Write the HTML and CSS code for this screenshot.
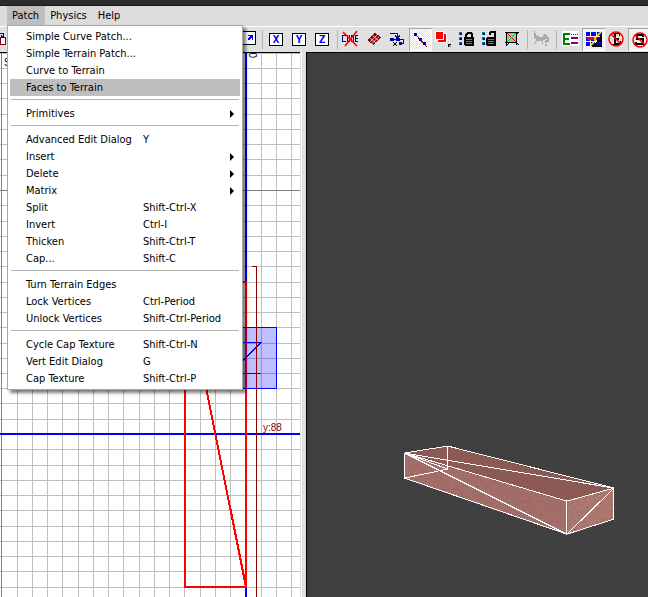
FILE: index.html
```
<!DOCTYPE html>
<html lang="en">

<head>
    <meta charset="UTF-8">
    <meta name="viewport" content="width=device-width, initial-scale=1.0">
    <title>Map Editor</title>
    <link rel="stylesheet" href="styles.css">
</head>

<body>
    <div class="titlebar"></div>

    <nav class="menubar">
        <div class="menu-entry">
            <button class="menu-title open" type="button">Patch</button>
            <ul class="menu">
                <li><button class="menu-item" type="button">Simple Curve Patch...</button></li>
                <li><button class="menu-item" type="button">Simple Terrain Patch...</button></li>
                <li><button class="menu-item" type="button">Curve to Terrain</button></li>
                <li><button class="menu-item active" type="button">Faces to Terrain</button></li>
                <li class="divider"></li>
                <li><button class="menu-item submenu" type="button">Primitives</button></li>
                <li class="divider"></li>
                <li><button class="menu-item" type="button"><span>Advanced Edit Dialog</span><span>Y</span></button></li>
                <li><button class="menu-item submenu" type="button">Insert</button></li>
                <li><button class="menu-item submenu" type="button">Delete</button></li>
                <li><button class="menu-item submenu" type="button">Matrix</button></li>
                <li><button class="menu-item" type="button"><span>Split</span><span>Shift-Ctrl-X</span></button></li>
                <li><button class="menu-item" type="button"><span>Invert</span><span>Ctrl-I</span></button></li>
                <li><button class="menu-item" type="button"><span>Thicken</span><span>Shift-Ctrl-T</span></button></li>
                <li><button class="menu-item" type="button"><span>Cap...</span><span>Shift-C</span></button></li>
                <li class="divider"></li>
                <li><button class="menu-item" type="button">Turn Terrain Edges</button></li>
                <li><button class="menu-item" type="button"><span>Lock Vertices</span><span>Ctrl-Period</span></button></li>
                <li><button class="menu-item" type="button"><span>Unlock Vertices</span><span>Shift-Ctrl-Period</span></button></li>
                <li class="divider"></li>
                <li><button class="menu-item" type="button"><span>Cycle Cap Texture</span><span>Shift-Ctrl-N</span></button></li>
                <li><button class="menu-item" type="button"><span>Vert Edit Dialog</span><span>G</span></button></li>
                <li><button class="menu-item" type="button"><span>Cap Texture</span><span>Shift-Ctrl-P</span></button></li>
            </ul>
        </div>
        <button class="menu-title" type="button">Physics</button>
        <button class="menu-title" type="button">Help</button>
    </nav>

    <div class="toolbar">
        <div class="tools-left">
            <button class="tool" type="button" aria-label="Rotate">
                <svg viewBox="0 0 23 23"><path d="M0 5.500h3.500v4M1 7.500l2.500 2.500" fill="none" stroke="#00009c"/><rect x="0.500" y="9.500" width="5" height="7" fill="#fff" stroke="#8b0000"/></svg>
            </button>
        </div>
        <button class="tool" type="button" aria-label="Scale">
            <svg viewBox="0 0 23 23"><path d="M3 3h17v14H3z"/><path d="M4 4h15v12H4z" fill="#fff"/><path d="M12 7h5v5h-1v-2h-1v1h-1v1h-2v-2h1V9h1V8h-2z" fill="#00f"/></svg>
        </button>
        <span class="tool-sep"></span>
        <button class="tool" type="button" aria-label="X axis"><span class="axis">X</span></button>
        <button class="tool" type="button" aria-label="Y axis"><span class="axis">Y</span></button>
        <button class="tool" type="button" aria-label="Z axis"><span class="axis">Z</span></button>
        <span class="tool-sep"></span>
        <button class="tool" type="button" aria-label="No curves">
            <svg viewBox="0 0 23 23">
                <path d="M6 7.500H2.500v6H6M7.500 7v6.500h2V7M11.500 14V7.500h2V14M18 7.500h-2.500v6H18M15.500 10.500H18" fill="none" stroke="#00009c"/>
                <path class="smooth" d="M3 4l14 14M17 3L5 18" fill="none" stroke="#f00" stroke-width="1.500"/>
            </svg>
        </button>
        <button class="tool" type="button" aria-label="Patch mesh">
            <svg viewBox="0 0 23 23">
                <path d="M12 5l6 4-7 8-7-5z" fill="#8b0000"/>
                <path class="smooth" d="M9.500 7.500l6 5M7 10l6 5M14 7l-7 7M16 8.500l-7 7" fill="none" stroke="#e0c8c8"/>
            </svg>
        </button>
        <button class="tool" type="button" aria-label="Redisperse">
            <svg viewBox="0 0 23 23">
                <path d="M4 5.500h7.500v4M9 7.500l2.500 2.500 2.500-2.500M4 11.500h13.500v4h-3" fill="none" stroke="#00009c"/>
                <path d="M4 10h4v3H4zM10 10h4v3h-4zM13 14h3v3h-3z" fill="#00009c"/>
                <path d="M7 14h1v1h1v1h1v-1h1v-1h-1v1H9v1H8v1H7v1h1v-1h1v-1h1v1h1v1h-1v-1H9v-1H8v-1H7z"/>
            </svg>
        </button>
        <button class="tool pressed" type="button" aria-label="Vertices">
            <svg viewBox="0 0 23 23">
                <path d="M6 6l12 13" stroke="#8b0000"/>
                <path d="M5 5h3v3H5zM10 10h3v3h-3zM14 14h3v3h-3z" fill="#00009c"/>
            </svg>
        </button>
        <button class="tool" type="button" aria-label="Layers">
            <svg viewBox="0 0 23 23">
                <path d="M3 3h10v2h2v10H6v-2H3z" fill="#fff"/>
                <path d="M4 4h7v7H4z" fill="#f00"/>
                <path d="M12 6h2v8H6v-2h6z" fill="#f00"/>
                <path d="M16 16h3v1h-2v2h-1z"/><path d="M17 17h2v2h-2z" fill="#999"/>
            </svg>
        </button>
        <button class="tool" type="button" aria-label="Lock">
            <svg viewBox="0 0 23 23">
                <path d="M4 4h3v3H4zM4 9h3v3H4zM4 14h3v3H4z" fill="#00808b"/>
                <path d="M5 5h2v2H5zM5 10h2v2H5zM5 15h2v2H5z" fill="#00009c"/>
                <path d="M10 10V6l1-1 1-1h4l1 1 1 1v4h-2V7l-1-1h-2l-1 1v3z"/>
                <path d="M9 9h10v8l-1 1h-8l-1-1z"/>
                <path d="M11 11.500h6M11 13.500h6M11 15.500h6" stroke="#777"/>
            </svg>
        </button>
        <button class="tool" type="button" aria-label="Unlock">
            <svg viewBox="0 0 23 23">
                <path d="M4 4h3v3H4zM4 9h3v3H4zM4 14h3v3H4z" fill="#00808b"/>
                <path d="M5 5h2v2H5zM5 10h2v2H5zM5 15h2v2H5z" fill="#00009c"/>
                <path d="M11 7V4l1-1h5l1 1v6h-2V6l-1-1h-2v2z"/>
                <path d="M9 9h9v8l-1 1H9l-1-1v-7z"/>
                <path d="M10 11.500h6M10 13.500h6M10 15.500h6" stroke="#777"/>
            </svg>
        </button>
        <button class="tool" type="button" aria-label="Clip bounds">
            <svg viewBox="0 0 23 23">
                <path d="M6 5h10v9H6z" fill="#b4b4b4"/>
                <path d="M4 4.500h14M4 14.500h12M5.500 4v14M15.500 4v13M5 18l3-3M15 7l3-3M15 14l3 3" fill="none" stroke="#000"/>
                <path d="M6 5l9 9" stroke="#f00"/>
                <path d="M15 5l-9 9" stroke="#0d3"/>
            </svg>
        </button>
        <span class="tool-sep"></span>
        <button class="tool" type="button" aria-label="Physics preview" disabled>
            <svg viewBox="0 0 23 23">
                <path d="M4 3h1l1 4 4 2h3l1-3 3 1v2h-2v3h-2v4h-1v-3H7l-2 3H4l2-4-2-3z" fill="#aaa"/>
                <path d="M14 12v-2h4v3h-2v2M15 17h2" fill="none" stroke="#aaa" stroke-width="2"/>
            </svg>
        </button>
        <span class="tool-sep"></span>
        <button class="tool" type="button" aria-label="Entities">
            <svg viewBox="0 0 23 23">
                <path d="M3 3h17v15H3z" fill="#fff"/>
                <path d="M11 6H5v10h6M5 11h5" fill="none" stroke="#008000" stroke-width="2"/>
                <path d="M12 6.500h7" stroke="#800080" stroke-dasharray="1 1"/>
                <path d="M12 9h7v2h-7zM12 14h7v2h-7z" fill="#800080"/>
            </svg>
        </button>
        <button class="tool pressed" type="button" aria-label="Texture grid">
            <svg viewBox="0 0 23 23">
                <path d="M4 4h4v4H4zM9 4h5v4H9zM15 4h5v4h-5zM4 9h4v4H4zM9 9h5v4H9zM15 9h5v4h-5zM4 14h4v4H4zM9 14h4v4H9z" fill="#00f"/>
                <path d="M5 9h10v3H5z" fill="#f00"/>
                <path d="M20 5v14H9l6-6z"/>
                <path d="M15 14h4v4h-4z" fill="#00009c"/>
                <path class="smooth" d="M19 4l-6 6v3l-5 5" fill="none" stroke="#ff0" stroke-width="1.500"/>
            </svg>
        </button>
        <button class="tool" type="button" aria-label="No entities">
            <svg viewBox="0 0 23 23">
                <path d="M7 5h8v3h-1V6h-3v4h3v2h-3v3h4v-2h1v4H7v-1h2V6H7z"/>
                <circle class="smooth" cx="11" cy="11" r="7" fill="none" stroke="#f00" stroke-width="1.500"/>
                <path class="smooth" d="M6 6l10 10" stroke="#f00" stroke-width="1.500"/>
            </svg>
        </button>
        <button class="tool pressed" type="button" aria-label="No surfaces">
            <svg viewBox="0 0 23 23">
                <path d="M15 9V7H9v4h6v5H8v-2" fill="none" stroke="#000" stroke-width="2"/>
                <circle class="smooth" cx="12" cy="12" r="7" fill="none" stroke="#f00" stroke-width="1.500"/>
                <path class="smooth" d="M7 7l10 10" stroke="#f00" stroke-width="1.500"/>
            </svg>
        </button>
    </div>

    <main class="views">
        <section class="view-2d">
            <svg viewBox="0 53 300 544" preserveAspectRatio="xMinYMin slice">
                <!-- grid, minor then major -->
                <g fill="none" shape-rendering="crispEdges">
                    <path stroke="#bfbfbf" d="M17.500 53v544M32.500 53v544M47.500 53v544M62.500 53v544M78.500 53v544M93.500 53v544M108.500 53v544M123.500 53v544M139.500 53v544M154.500 53v544M169.500 53v544M184.500 53v544M200.500 53v544M215.500 53v544M230.500 53v544M261.500 53v544M276.500 53v544M291.500 53v544"/>
                    <path stroke="#bfbfbf" d="M0 53.500h300M0 68.500h300M0 83.500h300M0 98.500h300M0 114.500h300M0 129.500h300M0 144.500h300M0 159.500h300M0 175.500h300M0 205.500h300M0 221.500h300M0 236.500h300M0 251.500h300M0 266.500h300M0 282.500h300M0 297.500h300M0 312.500h300M0 327.500h300M0 343.500h300M0 358.500h300M0 373.500h300M0 388.500h300M0 403.500h300M0 419.500h300M0 449.500h300M0 465.500h300M0 480.500h300M0 495.500h300M0 510.500h300M0 526.500h300M0 541.500h300M0 556.500h300M0 571.500h300M0 587.500h300"/>
                    <path stroke="#808080" d="M1.500 53v544M0 190.500h300"/>
                    <path stroke="#00f" stroke-width="2" d="M246 53v544M0 434h300"/>
                    <path stroke="#f00" stroke-width="2" d="M185 282h61v305h-61zM185 282l61 305"/>
                    <!-- camera volume -->
                    <path fill="#0000ff" fill-opacity="0.250" stroke="#00f" d="M200.500 327.500h76v61h-76z"/>
                    <path stroke="#00f" d="M230 342.500h31L230 373.500h31"/>
                    <path stroke="#8b0000" d="M252 266.500h4.500V597"/>
                </g>
                <text class="view-name" x="4" y="66">Side</text>
                <text class="tick" transform="translate(257 58) rotate(-90)">0</text>
                <text class="size" x="263" y="431">y:88</text>
            </svg>
        </section>
        <div class="sash"></div>
        <section class="view-3d">
            <svg viewBox="307 53 341 544" preserveAspectRatio="xMinYMin slice">
                <defs>
                    <filter id="stone" x="0" y="0" width="1" height="1">
                        <feTurbulence type="fractalNoise" baseFrequency="0.300" numOctaves="3" seed="4"/>
                        <feColorMatrix values="0 0 0 0 0.250  0 0 0 0 0.100  0 0 0 0 0.100  0.700 0 0 0 -0.250"/>
                        <feComposite in2="SourceGraphic" operator="in" result="grain"/>
                        <feMerge><feMergeNode in="SourceGraphic"/><feMergeNode in="grain"/></feMerge>
                    </filter>
                </defs>
                <g filter="url(#stone)">
                    <path fill="#8c5a55" d="M404 453l43-7 166 42-46 13z"/>
                    <path fill="#a5706a" d="M404 453l163 48v33l-163-56z"/>
                    <path fill="#ae7a72" d="M567 501l46-13v30l-46 16z"/>
                </g>
                <path class="wire" d="M404.500 452.500l43-7 166 42-47 13zM404.500 452.500v25l162 56 47-15v-31M566.500 500.500v33M447.500 445.500v23l-43 9M404.500 452.500l43 16M404.500 452.500l162 81M404.500 452.500l209 35M566.500 533.500l47-46"/>
            </svg>
        </section>
    </main>
</body>

</html>
```

FILE: styles.css
```
* {
    margin: 0;
    padding: 0;
    box-sizing: border-box;
}

body {
    font-family: "DejaVu Sans Condensed", "DejaVu Sans", sans-serif;
    font-size: 11px;
    color: #000;
    background-color: #e0e0e0;
    display: flex;
    flex-direction: column;
    height: 100vh;
    overflow: hidden;
}

button {
    font: inherit;
    color: inherit;
    background: none;
    border: none;
}

.titlebar {
    height: 6px;
    background-color: #2b2b2b;
    border-bottom: 1px solid #1c181b;
}

.menubar {
    display: flex;
    height: 20px;
    padding-left: 7px;
    background-color: #dcdcdc;
}

.menu-entry {
    position: relative;
    display: flex;
}

.menu-title {
    padding: 0 6px 1px 5px;
}

.menu-title.open {
    background-color: #bebebe;
}

.menu {
    position: absolute;
    top: 19px;
    left: 0;
    z-index: 10;
    width: 236px;
    padding: 2px;
    list-style: none;
    background-color: #fff;
    border: 1px solid #a9a9a9;
    box-shadow: 3px 3px 3px rgba(0, 0, 0, 0.5);
}

.menu-item {
    display: grid;
    grid-template-columns: 117px 1fr;
    align-items: center;
    width: 100%;
    height: 17px;
    padding-left: 16px;
    text-align: left;
    white-space: nowrap;
}

.menu-item.active {
    background-color: #bebebe;
}

.menu-item.submenu::after {
    content: "";
    justify-self: end;
    margin-right: 6px;
    border-left: 4px solid #000;
    border-top: 4px solid transparent;
    border-bottom: 4px solid transparent;
}

.divider {
    height: 1px;
    margin: 3px 1px 5px;
    background-color: #b4b4b4;
}

.toolbar {
    display: flex;
    height: 26px;
    padding: 1px 0 2px;
    border-top: 1px solid #fff;
    overflow: hidden;
}

.tools-left {
    flex: 0 0 236px;
}

.tool {
    display: flex;
    flex: 0 0 23px;
    align-items: center;
    justify-content: center;
    height: 23px;
}

.tool svg {
    width: 23px;
    height: 23px;
    flex: none;
    shape-rendering: crispEdges;
}

.tool svg .smooth {
    shape-rendering: auto;
}

.tool.pressed {
    background: repeating-conic-gradient(#fff 0 25%, #e4e4e4 0 50%) 0 0 / 2px 2px;
    box-shadow: inset 1px 1px #aaa, inset -1px -1px #fff;
}

.tool-sep {
    flex: 0 0 6px;
    background: linear-gradient(#b4b4b4, #b4b4b4) center / 1px 19px no-repeat;
}

.axis {
    width: 14px;
    height: 13px;
    margin-right: 1px;
    border: 1px solid #000;
    background-color: #fff;
    color: #00f;
    font: bold 11px/11px "DejaVu Sans Mono", monospace;
    text-align: center;
}

.views {
    display: flex;
    flex: 1;
    min-height: 0;
}

.view-2d,
.view-3d {
    min-width: 0;
    border-top: 1px solid #000;
    overflow: hidden;
}

.view-2d {
    flex: 300 1 0;
    background-color: #fff;
}

.view-3d {
    flex: 342 1 0;
    border-left: 1px solid #000;
    background-color: #404040;
}

.view-2d svg,
.view-3d svg {
    display: block;
    width: 100%;
    height: 100%;
}

.sash {
    flex: 0 0 6px;
    border-left: 1px solid #e0e0e0;
    background: linear-gradient(#fff, #fff) left / 1px 100% no-repeat;
}

.view-name,
.tick {
    font: 10px "Liberation Sans", sans-serif;
}

.size {
    font: 10px "Liberation Sans", sans-serif;
    fill: #8b0000;
}

.wire {
    fill: none;
    stroke: #fff;
    shape-rendering: crispEdges;
}
```
